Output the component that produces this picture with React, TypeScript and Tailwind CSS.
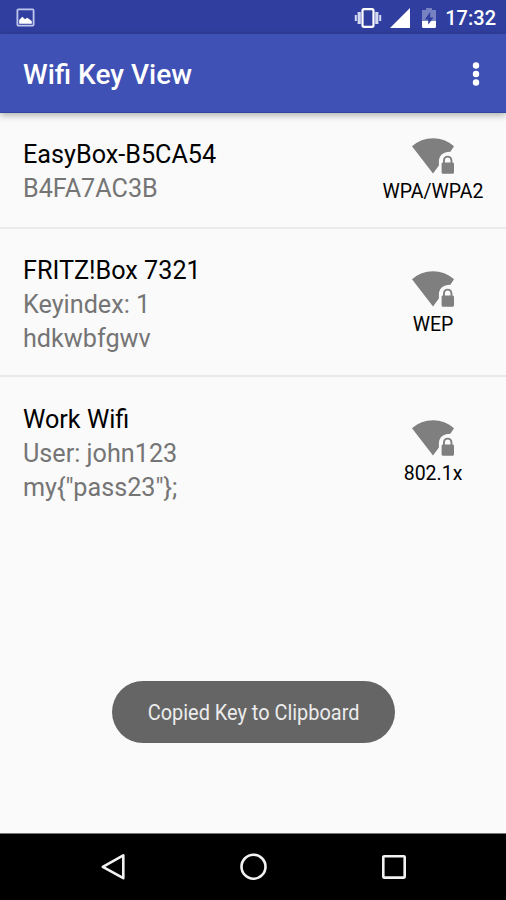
type Network = {
  name: string;
  details: string[];
  security: string;
  spacing: string;
};

const networks: Network[] = [
  { name: 'EasyBox-B5CA54', details: ['B4FA7AC3B'], security: 'WPA/WPA2', spacing: 'pt-[25px] pb-[21px]' },
  { name: 'FRITZ!Box 7321', details: ['Keyindex: 1', 'hdkwbfgwv'], security: 'WEP', spacing: 'pt-[25px] pb-[19px]' },
  { name: 'Work Wifi', details: ['User: john123', 'my{"pass23"};'], security: '802.1x', spacing: 'pt-[26px] pb-[19px]' },
];

function WifiLockIcon() {
  return (
    <svg width="42" height="36" viewBox="0 0 42 36" fill="#7f7f7f" aria-hidden="true">
      <path d="M0 8.3C6 3 13 .2 21 .2S36 3 42 8.3L38.4 13.8C30.5 14 26.9 18 26.9 23.5V27.6L21 35.6Z" />
      <path
        fillRule="evenodd"
        d="M31 24.5V22.5C31 19.8 33 17.8 35.7 17.8S40.4 19.8 40.4 22.5V24.5C41.4 24.5 42 25.1 42 26V34.3C42 35.2 41.4 35.8 40.5 35.8H31.1C30.2 35.8 29.6 35.2 29.6 34.3V26C29.6 25.1 30.1 24.5 31 24.5ZM32.9 24.5H38.5V22.5C38.5 20.8 37.4 19.6 35.7 19.6S32.9 20.8 32.9 22.5Z"
      />
    </svg>
  );
}

function StatusBar() {
  return (
    <div className="flex h-[34px] items-center justify-between bg-[#303f9f] pt-px pr-[10px] pl-4 text-white">
      <svg width="19" height="19" viewBox="0 0 19 19" aria-hidden="true">
        <rect x="1.4" y="1.4" width="16.2" height="16.2" rx="1" fill="none" stroke="#bfc7ee" strokeWidth="1.8" />
        <path d="M3.2 15.8V12L6.3 8.8L9 11.2L11.2 9.8L15.8 13V15.8Z" fill="#fff" />
      </svg>
      <div className="flex items-center">
        <svg width="28" height="20" viewBox="0 0 28 20" fill="none" aria-hidden="true">
          <rect x="8.5" y="1.2" width="11" height="17.6" rx="1.5" stroke="#fff" strokeWidth="2.2" />
          <path d="M5.2 4V16M22.8 4V16" stroke="#d5daf4" strokeWidth="3.2" />
          <path d="M1.8 7V13M26.2 7V13" stroke="#d5daf4" strokeWidth="2" />
        </svg>
        <svg className="ml-2" width="20" height="20" viewBox="0 0 20 20" fill="#fff" aria-hidden="true">
          <path d="M20 0V20H0Z" />
        </svg>
        <svg className="ml-3" width="14" height="20" viewBox="0 0 14 20" aria-hidden="true">
          <path d="M4 0H10V2H14V13H0V2H4Z" fill="#7782c3" />
          <path d="M0 13H14V18.5Q14 20 12.5 20H1.5Q0 20 0 18.5Z" fill="#fff" />
          <path d="M8.2 4L2.8 11.5H6.2V16.8L11.5 9.4H8.2Z" fill="#303f9f" />
        </svg>
        <span className="ml-[9px] pt-px text-[20px] leading-none font-medium">17:32</span>
      </div>
    </div>
  );
}

function AppBar() {
  return (
    <header className="relative flex h-[79px] items-center justify-between border-b border-[#2f479f] bg-[#3f51b5] pr-[26px] pl-[23px] text-white shadow-[0_2px_7px_rgba(0,0,0,0.32)]">
      <h1 className="pt-1 text-[28px] leading-none font-medium">Wifi Key View</h1>
      <svg className="mt-px" width="8" height="24" viewBox="0 0 8 24" fill="#fff" aria-hidden="true">
        <circle cx="4" cy="3.5" r="3.2" />
        <circle cx="4" cy="12" r="3.2" />
        <circle cx="4" cy="20.5" r="3.2" />
      </svg>
    </header>
  );
}

function NetworkRow({ network }: { network: Network }) {
  return (
    <li
      className={`flex items-center justify-between border-b-2 border-[#e9e9e9] pr-[17px] pl-[23px] last:border-transparent ${network.spacing}`}
    >
      <div className="text-[25.2px] leading-[34px] text-[#757575]">
        <p className="text-black">{network.name}</p>
        {network.details.map((line) => (
          <p key={line}>{line}</p>
        ))}
      </div>
      <div className="flex w-[112px] flex-col items-center pb-px">
        <WifiLockIcon />
        <span className="mt-[5px] text-[19.5px] leading-[26px] text-black">{network.security}</span>
      </div>
    </li>
  );
}

function NavigationBar() {
  return (
    <nav className="flex h-[67px] items-center justify-between border-t border-[#777] bg-black px-[101px]">
      <svg width="25" height="28" viewBox="0 0 25 28" fill="none" stroke="#f2f2f2" strokeWidth="2.6" aria-hidden="true">
        <path d="M22.3 2.3V25.2L1.8 13.8Z" strokeLinejoin="round" />
      </svg>
      <svg width="28" height="28" viewBox="0 0 28 28" fill="none" stroke="#f2f2f2" strokeWidth="2.6" aria-hidden="true">
        <circle cx="13.5" cy="13.7" r="12" />
      </svg>
      <svg className="mr-[-1px]" width="25" height="28" viewBox="0 0 25 28" fill="none" stroke="#f2f2f2" strokeWidth="2.6" aria-hidden="true">
        <rect x="2.3" y="3.2" width="21.4" height="21.4" rx="0.8" />
      </svg>
    </nav>
  );
}

export default function App() {
  return (
    <div className="relative flex h-[900px] w-[506px] flex-col overflow-hidden bg-[#fafafa] font-[Roboto,sans-serif]">
      <StatusBar />
      <AppBar />
      <ul className="flex-1">
        {networks.map((network) => (
          <NetworkRow key={network.name} network={network} />
        ))}
      </ul>
      <NavigationBar />

      {/* Toast */}
      <div className="absolute top-[681px] left-[112px] flex h-[62px] w-[283px] items-center justify-center rounded-full bg-[#656565] pt-0.5">
        <span className="scale-x-[0.885] text-[22.5px] whitespace-nowrap text-[#ececec]">Copied Key to Clipboard</span>
      </div>
    </div>
  );
}
